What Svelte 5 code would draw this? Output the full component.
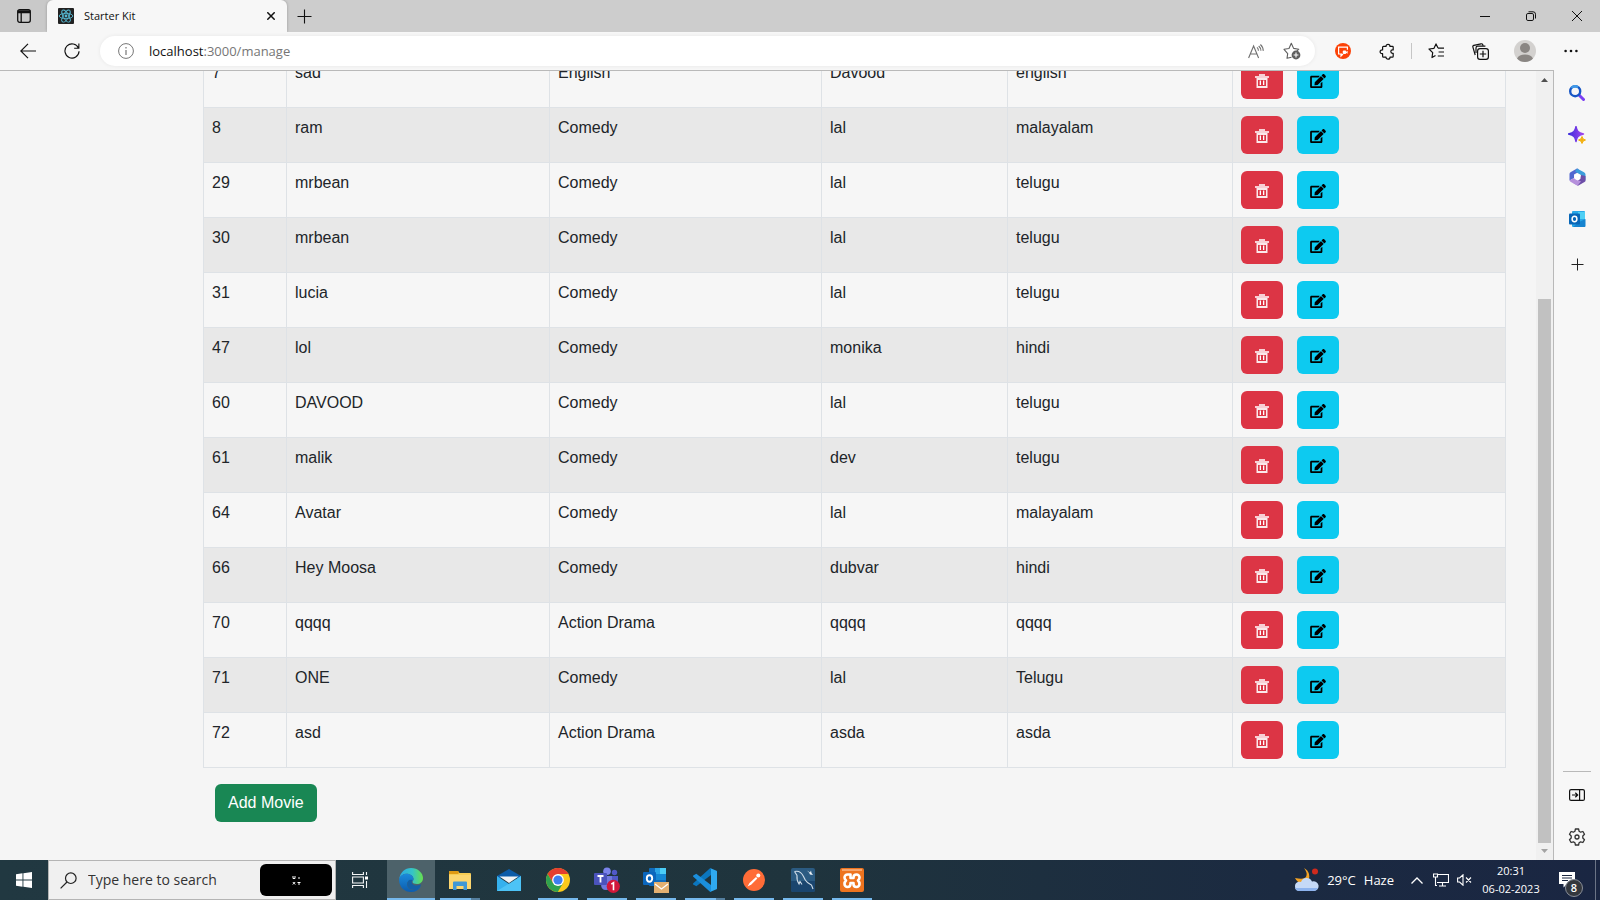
<script>
  const movies = [
    { id: 7, name: 'sad', genre: 'English', director: 'Davood', language: 'english' },
    { id: 8, name: 'ram', genre: 'Comedy', director: 'lal', language: 'malayalam' },
    { id: 29, name: 'mrbean', genre: 'Comedy', director: 'lal', language: 'telugu' },
    { id: 30, name: 'mrbean', genre: 'Comedy', director: 'lal', language: 'telugu' },
    { id: 31, name: 'lucia', genre: 'Comedy', director: 'lal', language: 'telugu' },
    { id: 47, name: 'lol', genre: 'Comedy', director: 'monika', language: 'hindi' },
    { id: 60, name: 'DAVOOD', genre: 'Comedy', director: 'lal', language: 'telugu' },
    { id: 61, name: 'malik', genre: 'Comedy', director: 'dev', language: 'telugu' },
    { id: 64, name: 'Avatar', genre: 'Comedy', director: 'lal', language: 'malayalam' },
    { id: 66, name: 'Hey Moosa', genre: 'Comedy', director: 'dubvar', language: 'hindi' },
    { id: 70, name: 'qqqq', genre: 'Action Drama', director: 'qqqq', language: 'qqqq' },
    { id: 71, name: 'ONE', genre: 'Comedy', director: 'lal', language: 'Telugu' },
    { id: 72, name: 'asd', genre: 'Action Drama', director: 'asda', language: 'asda' }
  ];
</script>

<div class="screen">
  <header class="tabs">
    <button class="tab-actions" aria-label="Tab actions">
      <svg width="14" height="14" viewBox="0 0 14 14" fill="none" stroke="#111" stroke-width="1.3">
        <rect x="0.7" y="0.7" width="12.6" height="12.6" rx="2" />
        <path d="M.7 2h12.6M.7 3.4h12.6" stroke-width="1.6" /><path d="M4.2 3.5v9.8" />
      </svg>
    </button>
    <div class="tab">
      <svg width="16" height="16" viewBox="0 0 16 16" fill="none" stroke="#56b9d3" stroke-width="0.9">
        <rect width="16" height="16" rx="1" fill="#222" stroke="none" />
        <ellipse cx="8" cy="8" rx="6.8" ry="2.7" />
        <ellipse cx="8" cy="8" rx="6.8" ry="2.7" transform="rotate(60 8 8)" />
        <ellipse cx="8" cy="8" rx="6.8" ry="2.7" transform="rotate(120 8 8)" />
        <circle cx="8" cy="8" r="1.4" fill="#56b9d3" stroke="none" />
      </svg>
      <span class="tab-title">Starter Kit</span>
      <button class="tab-close" aria-label="Close tab">
        <svg width="8" height="8" viewBox="0 0 8 8" stroke="#111" stroke-width="1.5"><path d="M.3.3l7.4 7.4M7.7.3L.3 7.7" /></svg>
      </button>
    </div>
    <button class="new-tab" aria-label="New tab">
      <svg width="15" height="15" viewBox="0 0 15 15" stroke="#111" stroke-width="1.1"><path d="M7.5 0.5v14M.5 7.5h14" /></svg>
    </button>
    <span class="spacer"></span>
    <button class="win" aria-label="Minimize"><svg width="10" height="10" viewBox="0 0 10 10" stroke="#111"><path d="M0 5.5h10" /></svg></button>
    <button class="win" aria-label="Restore"><svg width="10" height="10" viewBox="0 0 10 10" fill="none" stroke="#111"><rect x=".5" y="2.5" width="7" height="7" rx="1.4" /><path d="M2.5.8h4.6q2.4 0 2.4 2.4v4.3" /></svg></button>
    <button class="win" aria-label="Close"><svg width="10" height="10" viewBox="0 0 10 10" stroke="#111"><path d="M0 0l10 10M10 0L0 10" /></svg></button>
  </header>

  <nav class="toolbar">
    <button class="tool" aria-label="Back">
      <svg width="16" height="16" viewBox="0 0 16 16" fill="none" stroke="#111" stroke-width="1.2"><path d="M16 8H.8M8 .8L.8 8 8 15.2" /></svg>
    </button>
    <button class="tool" aria-label="Refresh">
      <svg width="16" height="16" viewBox="0 0 17 17" fill="none" stroke="#111" stroke-width="1.2"><path d="M15.4 5.5A7.5 7.5 0 1 0 16 8.8M15.8.6v5h-5" /></svg>
    </button>
    <div class="address">
      <svg width="16" height="16" viewBox="0 0 16 16" fill="none" stroke="#767676"><circle cx="8" cy="8" r="7.4" /><path d="M8 7v5M8 4v1.4" stroke-width="1.2" /></svg>
      <span class="url"><b>localhost</b>:3000/manage</span>
      <button class="inner" aria-label="Read aloud">
        <svg width="16" height="15" viewBox="0 0 16 15" fill="none" stroke="#707070" stroke-width="1.1"><path d="M.6 14L5.6 2l5 12M2.3 10h6.5M9 3.4q1.5 1.4 1.4 3.3M10.7 2q2.3 2 2.2 4.8M12.4.5q3 2.7 2.8 6.4" /></svg>
      </button>
      <button class="inner" aria-label="Add to favorites">
        <svg width="18" height="18" viewBox="0 0 18 18" fill="none" stroke="#5f5f5f" stroke-width="1.1" stroke-linejoin="round"><path d="M8.5 15.2L4 16.3l.7-4.7L1 7.3l5-.8L8.3 1.2l2.3 5.2 5.2.8-2 2" /><circle cx="13" cy="13" r="4.4" fill="#5f5f5f" stroke="none" /><path d="M13 10.6v4.8M10.6 13h4.8" stroke="#fff" /></svg>
      </button>
    </div>
    <button class="tool" aria-label="Screen extension">
      <svg width="16" height="16" viewBox="0 0 16 16"><circle cx="8" cy="8" r="8" fill="#fc4207" /><path d="M7 11H3.6V4.2h8.8v2.5M6 11v2l2-2" fill="none" stroke="#fff" stroke-width="1.2" /><rect x="7.8" y="7.6" width="3.4" height="3.4" rx="1" fill="#fff" /><path d="M11 9l1.6-1.2v3L11 9.8z" fill="#fff" /></svg>
    </button>
    <button class="tool" aria-label="Extensions">
      <svg width="16" height="17" viewBox="0 0 16 17" fill="none" stroke="#111" stroke-width="1.2" stroke-linejoin="round"><path d="M4.500 3.400H7a2 2 0 1 1 4 0h2.400q.8 0 .8.8v2.700h-.7a1.700 1.700 0 0 0 0 3.400h.7v3q0 .9-.8.900H11a2 2 0 0 1-4 0H4.500q-.9 0-.9-.9v-2.600H3a1.900 1.900 0 1 1 0-3.800h.6V4.300q0-.9.9-.9z" /></svg>
    </button>
    <span class="split"></span>
    <button class="tool" aria-label="Favorites">
      <svg width="17" height="16" viewBox="0 0 17 16" fill="none" stroke="#111" stroke-width="1.2" stroke-linejoin="round"><path d="M7.5 12.4L4 14.5l.7-4.8L1 6l5-.7L8 .9l1.9 3.8M9.8 5.2H16M10.6 9H16M9.8 13H16" /></svg>
    </button>
    <button class="tool" aria-label="Collections">
      <svg width="17" height="17" viewBox="0 0 17 17" fill="none" stroke="#111" stroke-width="1.2"><path d="M3.2 12L.9 4.2q-.4-1.4 1-1.8L9 .8q1.3-.3 1.8 1l.3 1" /><path d="M4 10V5q0-1.8 1.8-1.8h7.6" /><rect x="5.6" y="5.6" width="10.8" height="10.8" rx="2.4" /><path d="M11 7.8v6.4M7.800 11h6.400" /></svg>
    </button>
    <button class="tool wide" aria-label="Profile">
      <svg width="22" height="22" viewBox="0 0 22 22"><circle cx="11" cy="11" r="11" fill="#d3d1cf" /><circle cx="11" cy="8" r="5" fill="#8a8683" /><path d="M3 18.5q2-4 8-4t8 4q-3 3.4-8 3.5-5 0-8-3.500z" fill="#8a8683" /></svg>
    </button>
    <button class="tool wide" aria-label="Settings and more">
      <svg width="14" height="4" viewBox="0 0 14 4" fill="#111"><circle cx="1.6" cy="2" r="1.3" /><circle cx="7" cy="2" r="1.3" /><circle cx="12.4" cy="2" r="1.3" /></svg>
    </button>
  </nav>

  <div class="body">
    <div class="view">
      <main>
        <table>
          <colgroup><col class="c-id" /><col class="c-name" /><col class="c-genre" /><col class="c-dir" /><col class="c-lang" /><col /></colgroup>
          <tbody>
            {#each movies as movie (movie.id)}
              <tr>
                <td>{movie.id}</td>
                <td>{movie.name}</td>
                <td>{movie.genre}</td>
                <td>{movie.director}</td>
                <td>{movie.language}</td>
                <td>
                  <div class="actions">
                    <button class="btn danger" aria-label="Delete {movie.name}">
                      <svg width="14" height="14" viewBox="0 0 14 14"><path d="M4 0h6v2h4v2H0V2h4z" fill="#f7d0d5" /><path d="M1.500 4h11v10h-11zM3 6v6h8V6z" fill="#fbe9eb" fill-rule="evenodd" /><path d="M4.700 6.500H6v4.500H4.700zM8 6.500h1.300v4.500H8z" fill="#fff" /></svg>
                    </button>
                    <button class="btn info" aria-label="Edit {movie.name}">
                      <svg width="16" height="14" viewBox="0 0 576 512" fill="#000"><path d="M402.600 83.200l90.200 90.200c3.800 3.800 3.800 10 0 13.800L274.400 405.600l-92.800 10.300c-12.400 1.400-22.900-9.100-21.500-21.500l10.300-92.800L388.800 83.200c3.800-3.800 10-3.800 13.800 0zm162-22.900l-48.800-48.800c-15.200-15.200-39.900-15.200-55.200 0l-35.400 35.400c-3.800 3.800-3.800 10 0 13.800l90.200 90.200c3.800 3.800 10 3.800 13.800 0l35.400-35.400c15.200-15.300 15.200-40 0-55.200zM384 346.200V448H64V128h229.800c3.200 0 6.200-1.300 8.500-3.500l40-40c7.600-7.600 2.200-20.500-8.500-20.500H48C21.500 64 0 85.500 0 112v352c0 26.500 21.500 48 48 48h352c26.500 0 48-21.500 48-48V306.200c0-10.700-12.900-16-20.500-8.500l-40 40c-2.200 2.300-3.500 5.300-3.500 8.500z" /></svg>
                    </button>
                  </div>
                </td>
              </tr>
            {/each}
          </tbody>
        </table>
        <button class="btn success">Add Movie</button>
      </main>
      <div class="scrollbar">
        <svg width="7" height="4" viewBox="0 0 7 4"><path d="M0 4L3.500 0 7 4z" fill="#505050" /></svg>
        <div class="track"><div class="thumb"></div></div>
        <svg width="7" height="4" viewBox="0 0 7 4"><path d="M0 0h7L3.500 4z" fill="#a3a3a3" /></svg>
      </div>
    </div>

    <aside>
      <button aria-label="Search">
        <svg width="16" height="16" viewBox="0 0 16 16" fill="none"><path d="M10 10l4.500 4.500" stroke="#7b3ff2" stroke-width="3" stroke-linecap="round" /><circle cx="6.200" cy="6.200" r="5" stroke="#1757c6" stroke-width="2.400" /><path d="M2.500 3A5 5 0 0 1 9 2.200" stroke="#3f9ae8" stroke-width="2.400" /></svg>
      </button>
      <button aria-label="Discover">
        <svg width="18" height="18" viewBox="0 0 18 18"><defs><linearGradient id="spark" x1="0" x2="1"><stop stop-color="#3b2bdc" /><stop offset="1" stop-color="#a345ee" /></linearGradient></defs><path d="M8 .5c1 5 2 6 7.500 7.500C10 9.500 9 10.500 8 15.500 7 10.500 6 9.500.5 8 6 6.500 7 5.500 8 .5z" fill="url(#spark)" stroke="url(#spark)" stroke-width="1.400" stroke-linejoin="round" /><path d="M14 10.500q.5 3 3.500 3.500-3 .5-3.500 3.500-.5-3-3.500-3.500 3-.5 3.500-3.500z" fill="#f3b111" stroke="#f3b111" stroke-width="1" /></svg>
      </button>
      <button aria-label="Microsoft 365">
        <svg width="17" height="18" viewBox="0 0 17 18"><path d="M8 .5L1.500 4.200Q.5 5 .5 6v6.500L5 10V6.500L9.500 4V1z" fill="#5267cf" /><path d="M8 .5l7 3.700q1.500.8 1.500 2.300v6L12 10V7L6 3.500z" fill="#3c9ddb" /><path d="M16.500 8v4.500q0 1-1 1.600L9 17.700 4.500 15l6-3.500L12 7z" fill="#6d4fa8" /><path d="M.5 12.500L5 10l7 3.500-3.500 4.300-7-4z" fill="#b690dc" /><path d="M8.500 5.600l3 1.700v3.400l-3 1.700-3-1.700V7.300z" fill="#fff" /></svg>
      </button>
      <button aria-label="Outlook">
        <svg width="17" height="16" viewBox="0 0 17 16"><rect x="3" width="13" height="16" rx="1" fill="#28a8e8" /><path d="M9 1h7v7H9z" fill="#4fd0f5" /><path d="M16.500 8v7q0 1-1 1H4l6-5z" fill="#1684d0" /><rect y="2.500" width="11" height="11" rx="1" fill="#0867b8" /><ellipse cx="5.500" cy="8" rx="2.400" ry="2.700" fill="none" stroke="#fff" stroke-width="1.500" /></svg>
      </button>
      <button class="add" aria-label="Add to sidebar">
        <svg width="13" height="13" viewBox="0 0 13 13" stroke="#222"><path d="M6.500 .5v12M.5 6.500h12" /></svg>
      </button>
      <span class="spacer"></span>
      <hr />
      <button aria-label="Hide sidebar">
        <svg width="16" height="12" viewBox="0 0 16 12" fill="none" stroke="#111" stroke-width="1.200"><rect x=".6" y=".6" width="14.800" height="10.800" rx="1.500" /><path d="M10.600.6v10.800M3 6h5.500M6.300 3.700L8.700 6 6.300 8.300" /></svg>
      </button>
      <button aria-label="Settings">
        <svg width="18" height="18" viewBox="0 0 18 18" fill="none" stroke="#333" stroke-width="1.300" stroke-linejoin="round"><path d="M7.400 1h3.200l.5 2.300 1.500.9 2.300-.7 1.600 2.800L14.800 8v2l1.700 1.700-1.600 2.800-2.300-.7-1.500.9-.5 2.300H7.400l-.5-2.300-1.500-.9-2.300.7-1.600-2.800L3.200 10V8L1.500 6.300l1.600-2.800 2.300.7 1.500-.9z" /><circle cx="9" cy="9" r="2" /></svg>
      </button>
    </aside>
  </div>

  <footer>
    <button class="start" aria-label="Start">
      <svg width="16" height="16" viewBox="0 0 16 16" fill="#fff"><path d="M0 2.200L6.500 1.300v6.200H0zM7.400 1.200L16 0v7.500H7.400zM0 8.400h6.500v6.300L0 13.800zM7.400 8.400H16V16l-8.600-1.200z" /></svg>
    </button>
    <label class="search">
      <svg width="17" height="17" viewBox="0 0 17 17" fill="none" stroke="#222" stroke-width="1.200"><circle cx="10.800" cy="6.200" r="5.300" /><path d="M7 10L.6 16.400" /></svg>
      <input type="text" placeholder="Type here to search" aria-label="Type here to search" />
      <span class="doodle">
        <svg width="9" height="9" viewBox="0 0 9 9" fill="none" stroke="#fff"><path d="M1 0v2.500h2V0M6 2h2M.8 6l2.400 2.500M3.200 6L.8 8.500M5.500 6.500h3M7 6v3" /></svg>
      </span>
    </label>
    <button class="taskview" aria-label="Task view">
      <svg width="17" height="16" viewBox="0 0 17 16" fill="none" stroke="#f4f6f7" stroke-width="1.100"><path d="M.6 0v2.500h10.800V0M.6 16v-2.500h10.800V16M.6 5h10.800v6H.6zM14.500 0v3M14.500 9v7" /><path d="M13 4.500h3v3h-3z" fill="#fff" stroke="none" /></svg>
    </button>
    <div class="apps">
      <button class="app active run" aria-label="Microsoft Edge">
        <svg width="24" height="24" viewBox="0 0 24 24"><defs><linearGradient id="e1" x1="0" x2="1"><stop stop-color="#2baae5" /><stop offset=".55" stop-color="#35c4c8" /><stop offset="1" stop-color="#67e04d" /></linearGradient><linearGradient id="e2" x1="0" y1="0" x2="0" y2="1"><stop stop-color="#1b8bdc" /><stop offset="1" stop-color="#0d5cad" /></linearGradient></defs><path d="M.3 11C1 4.500 6 0 12 0c7 0 12 5 12 10 0 4-3 6-6 6-2.700 0-4.500-1-4.500-2 0-.8 1-1.200 1-3 0-3-3-5.300-7-5.300-3.500 0-6 2-7.200 5.300z" fill="url(#e1)" /><path d="M.2 10.800C1 8 4 5.700 7.500 5.700c4 0 7 2.300 7 5.300 0 .8-.3 1.400-.6 2-1-1.200-5.700-1-5.700 3.200 0 4 4 7 8.800 5.300a13 13 0 0 0 5-3C20 22 16.500 24 12 24 5 24-.6 18 .2 10.800z" fill="url(#e2)" /><path d="M8.200 16.200c0-4 3-5 5-4.200-1.500 3 .8 5.500 4.300 5.500 2 0 3.400-.6 4.600-1.200-.3 3-3 5.400-5.900 5.600-4.500.2-8-2-8-5.700z" fill="#1460a6" /></svg>
      </button>
      <button class="app run multi" aria-label="File Explorer">
        <svg width="22" height="19" viewBox="0 0 22 19"><path d="M0 1q0-1 1-1h8l1.500 2H21q1 0 1 1v15H0z" fill="#f8cd54" /><path d="M0 1q0-1 1-1h8l1 2-1 1H0z" fill="#e09a13" /><path d="M0 4h22v14H0z" fill="#fcd66f" /><path d="M4 19v-7.500q0-1 1-1h12q1 0 1 1V19h-3.500v-4h-7v4z" fill="#3f98d6" /></svg>
      </button>
      <button class="app" aria-label="Mail">
        <svg width="24" height="22" viewBox="0 0 24 22"><path d="M0 7l12-7 12 7v2H0z" fill="#0d5ca8" /><path d="M0 7l12 8 12-8v15H0z" fill="#35b1ee" /><path d="M0 22L24 7v15z" fill="#54c8f7" opacity=".8" /><path d="M2.500 7.500h19L12 14z" fill="#f1f3f5" /></svg>
      </button>
      <button class="app run" aria-label="Google Chrome">
        <svg width="24" height="24" viewBox="0 0 24 24"><circle cx="12" cy="12" r="12" fill="#fbc91b" /><path d="M1.600 6A12 12 0 0 1 22.400 6H12L7 15z" fill="#e43e30" /><path d="M1.600 6A12 12 0 0 0 11.800 24l5.300-9H7z" fill="#2fa14f" /><circle cx="12" cy="12" r="5.900" fill="#fff" /><circle cx="12" cy="12" r="4.600" fill="#3d7ff0" /></svg>
      </button>
      <button class="app run" aria-label="Microsoft Teams">
        <svg width="26" height="26" viewBox="0 0 26 26"><circle cx="13" cy="4.200" r="3.800" fill="#7b83eb" /><circle cx="20.500" cy="5.500" r="2.700" fill="#5059c9" /><path d="M16 9h8v8q-3 5-8 3z" fill="#5059c9" /><path d="M7 9h11v9q-1 5-6 5t-5-6z" fill="#7179dd" /><rect y="6" width="13" height="12" rx="1" fill="#4b53bc" /><path d="M3.500 9h6M6.500 9v6.500" stroke="#fff" stroke-width="1.800" /><circle cx="19.300" cy="19.300" r="6.600" fill="#d1173a" /><path d="M17.300 17.200l2.200-1.500v7.500" fill="none" stroke="#fff" stroke-width="1.600" /></svg>
      </button>
      <button class="app run" aria-label="Outlook">
        <svg width="26" height="26" viewBox="0 0 26 26"><rect x="6" y="1" width="17" height="18" rx="1" fill="#0f6cbd" /><path d="M12 1h5v6h-5z" fill="#2aa5e5" /><path d="M17 1h6v6h-6z" fill="#4bcdf6" /><path d="M12 7h11v6H12z" fill="#1587d3" /><rect y="5" width="13" height="13" rx="1" fill="#0a66bd" /><ellipse cx="6.500" cy="11.500" rx="2.700" ry="3.200" fill="none" stroke="#fff" stroke-width="1.900" /><path d="M11 15h15v11H11z" fill="#e3b071" /><path d="M12 17l6.500 5 6.500-5" fill="none" stroke="#fff" stroke-width="1.300" /></svg>
      </button>
      <button class="app run multi" aria-label="Visual Studio Code">
        <svg width="24" height="24" viewBox="0 0 24 24"><path d="M18 0v7L3.300 18.200.3 16.500q-.6-.6 0-1.200L17 .3z" fill="#0b76be" /><path d="M18 24v-7L3.300 5.800.3 7.500q-.6.6 0 1.200L17 23.700z" fill="#1b8fdc" /><path d="M17 0l6.500 2.800q.5.2.5.800v16.800q0 .6-.5.800L17 24q1 0 1-1V1q0-1-1-1z" fill="#2fa9f0" /></svg>
      </button>
      <button class="app run" aria-label="Postman">
        <svg width="22" height="22" viewBox="0 0 22 22"><circle cx="11" cy="11" r="11" fill="#ff6c37" /><path d="M4.500 17.500L6.500 14l6.500-6 1.400 1.400-6 6.100z" fill="#fff" /><circle cx="15.300" cy="6.500" r="2" fill="#fff" /></svg>
      </button>
      <button class="app run" aria-label="MySQL Workbench">
        <svg width="24" height="24" viewBox="0 0 24 24" fill="none"><rect width="24" height="24" rx="2" fill="#2b5b82" /><path d="M0 13h24v9q0 2-2 2H2q-2 0-2-2z" fill="#1a456e" /><path d="M3.500 3.500q6-1.500 9 5 1.500 4 4 6l4 2.500 1.500 4M3.500 3.500l2.500 4q-.5 5 2 8.500l1-2.500 2 3" stroke="#cfdce7" stroke-width="1.100" /><path d="M16 2.500l2 2 1 2 3 .5-1.500-2-.5-2.500-1 2z" fill="#f1f5f8" /></svg>
      </button>
      <button class="app run" aria-label="XAMPP">
        <svg width="24" height="24" viewBox="0 0 24 24" fill="none"><rect width="24" height="24" rx="2" fill="#ee741f" /><path d="M2 1h20v2H2z" fill="#f6a56c" /><path d="M9.500 6.500H7.500a3 3 0 0 0-3 3q0 1.500 1.500 3-1.500 1.500-1.500 3.500a3 3 0 0 0 3 3q3 0 3-3v-1h3v1q0 3 3 3a3 3 0 0 0 3-3q0-2-1.500-3.500 1.500-1.500 1.500-3a3 3 0 0 0-3-3q-3 0-3 3v.5h-3v-3.500z" stroke="#fff" stroke-width="2.600" stroke-linejoin="round" /></svg>
      </button>
    </div>
    <span class="spacer"></span>
    <div class="weather">
      <svg width="25" height="24" viewBox="0 0 25 24"><path d="M10 0q4 5 2 9-2 3-11 1 3 6 8 5 8-2 6-9Q14 2 10 0z" fill="#f3a325" /><circle cx="21" cy="3.500" r="3" fill="#cf2a1d" /><path d="M5 23a4.700 4.700 0 0 1 0-9.300q1-.2 2 .2a6 6 0 0 1 11-.4 4.900 4.900 0 1 1 1.500 9.500z" fill="#c5d9f7" /><path d="M1 20h23q-1 3-5 3H5q-3 0-4-3z" fill="#8db3ee" /></svg>
      <span>29°C</span><span>Haze</span>
    </div>
    <button class="chev" aria-label="Show hidden icons"><svg width="12" height="7" viewBox="0 0 12 7" fill="none" stroke="#fff" stroke-width="1.300"><path d="M.5 6.500L6 1l5.500 5.500" /></svg></button>
    <button class="net" aria-label="Network"><svg width="16" height="14" viewBox="0 0 16 14" fill="none" stroke="#fff" stroke-width="1.100"><path d="M5 1.500h10.500v8H4M9.500 9.500v3M6 13h7" /><path d="M.5 1h4v3h-4zM2.500 4v8.500H4" /></svg></button>
    <button class="vol" aria-label="Volume muted"><svg width="15" height="12" viewBox="0 0 15 12" fill="none" stroke="#fff" stroke-width="1.100"><path d="M.6 4h2L6 .8v10.400L2.600 8h-2zM9 3.500l5 5M14 3.500l-5 5" /></svg></button>
    <div class="clock"><span>20:31</span><span>06-02-2023</span></div>
    <button class="notes" aria-label="Notifications">
      <svg width="16" height="16" viewBox="0 0 16 16"><path d="M0 0h16v12H8l-3.500 3.500V12H0z" fill="#fff" /><path d="M3 3.500h10M3 6h10M3 8.500h6" stroke="#1b2740" /></svg>
      <span class="count">8</span>
    </button>
    <span class="peek"></span>
  </footer>
</div>

<style>
  :global(body) { margin: 0; }
  .screen { display: flex; flex-direction: column; height: 100vh; overflow: hidden; font-family: "Open Sans", "Noto Sans", sans-serif; background: #f7f7f7; }
  button { display: flex; align-items: center; justify-content: center; margin: 0; padding: 0; border: 0; background: none; font: inherit; color: inherit; flex: none; }
  svg { display: block; flex: none; }
  .spacer { flex: 1; }

  .tabs { display: flex; height: 32px; flex: none; background: #cdcdcd; }
  .tab-actions { width: 47px; background: #c9c9c9; border-radius: 0 0 6px 0; }
  .tab { display: flex; align-items: center; width: 240px; box-sizing: border-box; padding: 0 12px 0 11px; background: #f7f7f7; border-radius: 6px 6px 0 0; box-shadow: 0 0 3px #0004; clip-path: inset(0 -3px 0 -3px); }
  .tab-title { flex: 1; margin-left: 10px; font-size: 11px; line-height: 16px; color: #111; }
  .tab-close { width: 8px; height: 16px; }
  .new-tab { width: 35px; }
  .win { width: 46px; }

  .toolbar { display: flex; align-items: center; height: 38px; flex: none; padding: 0 6px; background: #f7f7f7; }
  .tool { width: 44px; height: 36px; }
  .wide { width: 46px; }
  .address { display: flex; align-items: center; flex: 1; height: 30px; margin: 0 6px; padding: 0 5px 0 18px; border-radius: 15px; background: #fff; box-shadow: 0 0 4px #0001; }
  .url { flex: 1; margin-left: 15px; font-size: 13px; line-height: 18px; color: #767676; }
  .url b { font-weight: 400; color: #111; }
  .inner { width: 36px; }
  .split { width: 1px; height: 16px; margin: 0 2px; background: #c6c6c6; }

  .body { display: flex; flex: 1; min-height: 0; }
  .view { display: flex; flex: 1; min-width: 0; border-top: 1px solid #b9b9b9; border-right: 1px solid #b9b9b9; background: #f5f5f5; }
  main { display: flex; flex-direction: column; justify-content: flex-end; align-items: flex-start; flex: 1; min-width: 0; overflow: hidden; box-sizing: border-box; padding: 0 30px 38px 203px; font: 16px/24px "Liberation Sans", Arial, sans-serif; color: #212529; }
  table { width: 100%; table-layout: fixed; border-collapse: collapse; }
  .c-id { width: 83px; }
  .c-name { width: 263px; }
  .c-genre { width: 272px; }
  .c-dir { width: 186px; }
  .c-lang { width: 225px; }
  td { padding: 8px; border: 1px solid #dee2e6; vertical-align: top; background: #f6f6f6; }
  tr:nth-child(even) td { background: #e8e8e8; }
  .actions { display: flex; gap: 14px; }
  .btn { width: 42px; height: 38px; border-radius: 6px; }
  .danger { background: #dc3545; }
  .info { background: #0dcaf0; }
  .btn svg { margin-top: 2px; }
  .success { width: auto; margin: 16px 0 0 12px; padding: 0 13px; background: #198754; color: #fff; }
  .scrollbar { display: flex; flex-direction: column; align-items: center; width: 17px; box-sizing: border-box; padding: 7px 0; background: #f0f0f0; }
  .track { display: flex; flex-direction: column; justify-content: flex-end; flex: 1; width: 13px; padding: 6px 0; }
  .thumb { height: 72%; background: #c1c1c1; }

  aside { display: flex; flex-direction: column; align-items: center; width: 46px; flex: none; box-sizing: border-box; padding: 2px 0; }
  aside button { width: 46px; height: 42px; }
  aside .add { margin-top: 3px; }
  hr { width: 28px; height: 1px; margin: 0 0 2px; border: 0; background: #b9b9b9; }

  footer { display: flex; align-items: stretch; height: 40px; flex: none; color: #fff; background: linear-gradient(90deg, #213841, #1f343d 50%, #1b2a41 80%, #1a2642); }
  .start { width: 48px; }
  .search { display: flex; align-items: center; width: 288px; box-sizing: border-box; padding: 0 3px 0 11px; border: 1px solid #b4b4b4; background: #f0f0f0; }
  .search input { flex: 1; min-width: 0; margin-left: 11px; padding: 0; border: 0; outline: 0; background: none; font: 14px/20px "Open Sans", "Noto Sans", sans-serif; color: #333; }
  .search input::placeholder { color: #333; opacity: 1; }
  .doodle { display: flex; align-items: center; justify-content: center; width: 72px; height: 32px; border-radius: 6px; background: #000; }
  .taskview { width: 48px; margin-right: 3px; }
  .apps { display: flex; gap: 1px; }
  .app { position: relative; width: 48px; }
  .active { background: #4d626a; }
  .run::after { content: ""; position: absolute; left: 4px; right: 4px; bottom: 0; height: 2px; background: #76b9ed; }
  .active::after { left: 0; right: 0; }
  .multi::after { background: linear-gradient(90deg, #76b9ed 31px, #547f9f 31px); }
  .weather { display: flex; align-items: center; gap: 8px; margin-right: 13px; font-size: 13px; line-height: 20px; }
  .chev { width: 20px; }
  .net { width: 28px; }
  .vol { width: 18px; }
  .clock { display: flex; flex-direction: column; align-items: center; justify-content: center; width: 68px; margin-left: 4px; font-size: 11px; line-height: 18px; }
  .notes { position: relative; width: 40px; margin: 0 6px 0 4px; padding-right: 4px; box-sizing: border-box; }
  .count { position: absolute; left: 16px; top: 19px; width: 16px; height: 16px; border: 1px solid #8a8f98; border-radius: 50%; background: #33373d; font-size: 11px; font-weight: 600; line-height: 16px; text-align: center; }
  .peek { width: 1px; margin-right: 4px; background: #6b7486; }
</style>
